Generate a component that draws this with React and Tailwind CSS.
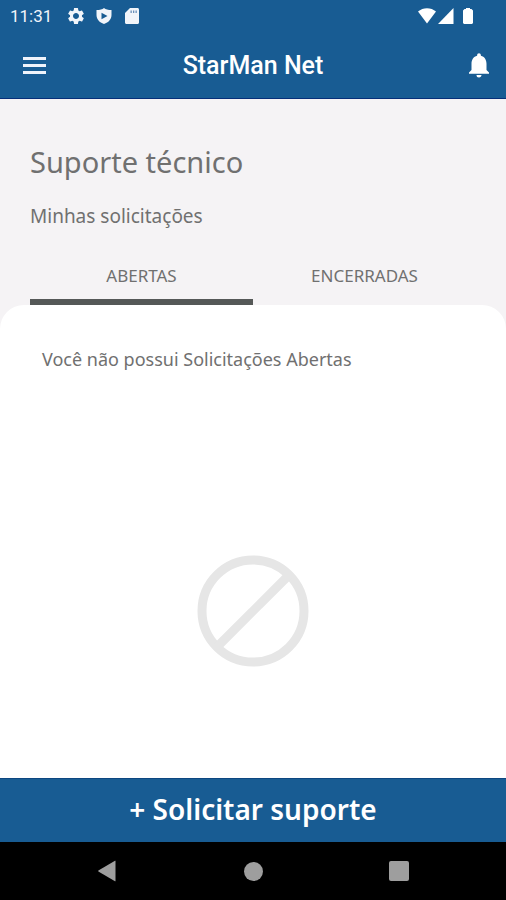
import { useState } from 'react';
import { MdSettings, MdNotifications } from 'react-icons/md';

const tabs = [
  { id: 'open', label: 'ABERTAS', empty: 'Você não possui Solicitações Abertas' },
  { id: 'closed', label: 'ENCERRADAS', empty: 'Você não possui Solicitações Encerradas' },
];

function StatusBar() {
  return (
    <div className="flex h-8 items-center justify-between pr-8 pl-2.5 text-[#f1f5fa]">
      <div className="flex items-center">
        <span className="mr-3.5 text-[17px] leading-8">11:31</span>
        <MdSettings className="mr-2.5 h-5 w-5" />
        {/* Play Protect shield */}
        <svg className="mr-3 h-4 w-4" viewBox="0 0 16 16" fill="currentColor">
          <path
            fillRule="evenodd"
            d="M8 0C9.800 1.500 12 2 15.500 2v5c0 4.300-3 7.500-7.500 9-4.500-1.500-7.500-4.700-7.500-9V2C4 2 6.200 1.500 8 0zM5.500 4.800v6.400l6-3.200z"
          />
        </svg>
        {/* SD card */}
        <svg className="h-4 w-4" viewBox="0 0 16 16" fill="currentColor">
          <path d="M6 0h7.500C14.400 0 15 .7 15 1.500v13c0 .8-.6 1.500-1.500 1.500h-11C1.600 16 1 15.300 1 14.500V5z" />
          <path d="M6.500 2.500h1.300V5H6.500zM9 2.500h1.300V5H9zM11.500 2.500h1.300V5h-1.300z" fill="#6a90ba" />
        </svg>
      </div>
      <div className="flex items-center">
        <svg className="h-4 w-[18px]" viewBox="0 0 18 16" fill="#fff">
          <path d="M0 3.500C5-1 13-1 18 3.500L9 15.500z" />
        </svg>
        <svg className="ml-0.5 h-4 w-4" viewBox="0 0 16 16" fill="#fff">
          <path d="M15.500 0v16H0z" />
        </svg>
        <svg className="ml-2 h-4 w-3" viewBox="0 0 12 16" fill="#fff">
          <path d="M4 0h4v1h1.500L11 2.500V15l-1 1H2l-1-1V2.500L2.500 1H4z" />
        </svg>
      </div>
    </div>
  );
}

function NavBar() {
  return (
    <nav className="flex h-[58px] items-center justify-center bg-black text-[#9e9e9e]">
      <button aria-label="Voltar" className="flex w-[146px] justify-center">
        <svg className="h-[22px] w-[18px]" viewBox="0 0 18 22" fill="currentColor">
          <path d="M17.500 1v20c0 .3-.2.300-.5.200L.4 11.400c-.3-.2-.3-.6 0-.8L17 .8c.3-.1.500-.1.500.2z" />
        </svg>
      </button>
      <button aria-label="Início" className="flex w-[146px] justify-center">
        <span className="h-[19px] w-[19px] rounded-full bg-[#9e9e9e]" />
      </button>
      <button aria-label="Recentes" className="flex w-[146px] justify-center">
        <span className="h-5 w-5 rounded-xs bg-[#9e9e9e]" />
      </button>
    </nav>
  );
}

export default function App() {
  const [active, setActive] = useState('open');
  const current = tabs.find((tab) => tab.id === active);

  return (
    <div className="flex min-h-screen flex-col bg-[#f5f3f5] font-['Noto_Sans',sans-serif] text-[#707070]">
      <header className="border-b border-[#062f79] bg-[#185c93] font-['Roboto',sans-serif] text-white">
        <StatusBar />
        <div className="grid h-[66px] grid-cols-[1fr_auto_1fr] items-center px-3">
          <button aria-label="Menu" className="justify-self-start pl-[11px]">
            <svg className="h-[17px] w-[23px]" viewBox="0 0 23 17" fill="#eef3fb">
              <path d="M0 0h23v3H0zM0 7h23v3H0zM0 14h23v3H0z" />
            </svg>
          </button>
          <h1 className="pt-0.5 text-[25px] leading-8 font-medium">StarMan Net</h1>
          <button aria-label="Notificações" className="justify-self-end">
            <MdNotifications className="h-[30px] w-[30px]" />
          </button>
        </div>
      </header>

      <main className="flex grow flex-col">
        <div className="px-[30px] pt-[43px]">
          <h2 className="text-[29px] leading-10">Suporte técnico</h2>
          <p className="mt-[18px] text-[19px] leading-8">Minhas solicitações</p>
          <div role="tablist" className="mt-3 grid grid-cols-2">
            {tabs.map((tab) => (
              <button
                key={tab.id}
                role="tab"
                id={`tab-${tab.id}`}
                aria-controls="requests"
                aria-selected={active === tab.id}
                onClick={() => setActive(tab.id)}
                className={`h-[61px] border-b-6 pt-2 text-[17px] ${
                  active === tab.id ? 'border-[#555857]' : 'border-transparent'
                }`}
              >
                {tab.label}
              </button>
            ))}
          </div>
        </div>

        <section
          id="requests"
          role="tabpanel"
          aria-labelledby={`tab-${active}`}
          className="flex grow flex-col rounded-t-3xl bg-white"
        >
          <p className="px-[42px] pt-10 text-lg leading-7">{current.empty}</p>
          <div className="flex grow items-center justify-center pt-[70px]">
            <svg className="h-28 w-28" viewBox="0 0 112 112" fill="none" stroke="#e6e6e6" strokeWidth="9">
              <circle cx="56" cy="56" r="51" />
              <path d="M20 92L92 20" />
            </svg>
          </div>
        </section>
      </main>

      <button className="h-16 border-t border-[#0d4680] bg-[#185c93] pb-1 text-[28px] leading-10 font-semibold text-white">
        + Solicitar suporte
      </button>
      <NavBar />
    </div>
  );
}
